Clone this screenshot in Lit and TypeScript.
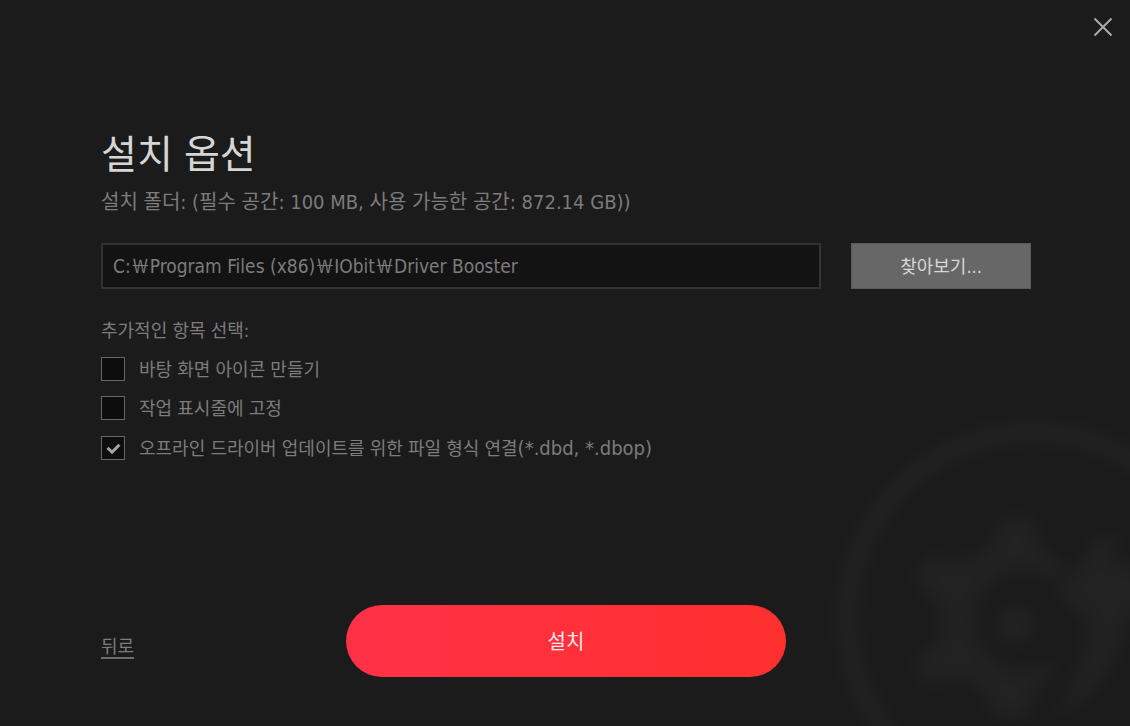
import { LitElement, html, css, nothing } from "lit";
import { customElement, property, state } from "lit/decorators.js";

interface SetupOption {
  id: string;
  label: string;
  pattern?: string;
  checked: boolean;
}

const fontStack = css`"DejaVu Sans Condensed", "Noto Sans CJK KR", sans-serif`;

@customElement("setup-checkbox")
class SetupCheckbox extends LitElement {
  @property() label = "";
  @property() pattern = "";
  @property({ type: Boolean }) checked = false;

  static styles = css`
    :host {
      display: block;
    }
    .row {
      display: flex;
      width: fit-content;
      align-items: center;
      gap: 14px;
      font: 18px/24px ${fontStack};
      color: #7c7c7c;
      cursor: pointer;
    }
    .mark {
      display: grid;
      flex: none;
    }
    .box,
    .tick {
      grid-area: 1 / 1;
      width: 24px;
      height: 24px;
    }
    .box {
      appearance: none;
      box-sizing: border-box;
      margin: 0;
      border: 1px solid #666;
      background: #0d0d0d;
    }
    .tick {
      fill: none;
      stroke: #a6a6a6;
      stroke-width: 3;
      pointer-events: none;
      visibility: hidden;
    }
    .box:checked + .tick {
      visibility: visible;
    }
    .text {
      padding-top: 2px;
    }
    .pattern {
      font-size: 20px;
    }
  `;

  private toggle(e: Event) {
    this.checked = (e.target as HTMLInputElement).checked;
  }

  render() {
    return html`
      <label class="row">
        <span class="mark">
          <input class="box" type="checkbox" .checked=${this.checked} @change=${this.toggle} />
          <svg class="tick" viewBox="0 0 24 24" aria-hidden="true">
            <path d="M6.6 11.8 L11 16.2 L18.4 8.8" />
          </svg>
        </span>
        <span class="text"
          >${this.label}${this.pattern ? html`<span class="pattern">${this.pattern}</span>` : nothing}</span
        >
      </label>
    `;
  }
}

@customElement("app-root")
class AppRoot extends LitElement {
  @state() private path = "C:￦Program Files (x86)￦IObit￦Driver Booster";

  private options: SetupOption[] = [
    { id: "desktop", label: "바탕 화면 아이콘 만들기", checked: false },
    { id: "taskbar", label: "작업 표시줄에 고정", checked: false },
    {
      id: "assoc",
      label: "오프라인 드라이버 업데이트를 위한 파일 형식 연결",
      pattern: "(*.dbd, *.dbop)",
      checked: true,
    },
  ];

  static styles = css`
    :host {
      display: block;
      font-family: ${fontStack};
      color: #7c7c7c;
      background: #1b1b1b;
    }
    * {
      box-sizing: border-box;
    }
    .window {
      position: relative;
      display: flex;
      flex-direction: column;
      min-height: 100vh;
      overflow: hidden;
    }
    .watermark {
      position: absolute;
      right: 0;
      bottom: 0;
      width: 340px;
      height: 326px;
      opacity: 0.027;
      pointer-events: none;
    }
    .titlebar {
      display: flex;
      justify-content: flex-end;
      padding: 12px;
    }
    .close {
      width: 30px;
      height: 30px;
      padding: 0;
      border: 0;
      background: none;
      cursor: pointer;
    }
    .close svg {
      display: block;
      width: 30px;
      height: 30px;
      stroke: #aaa;
      stroke-width: 2;
    }
    .content {
      position: relative;
      flex: 1;
      padding: 73px 99px 0 101px;
    }
    h1 {
      margin: 0;
      font-size: 39px;
      line-height: 56px;
      font-weight: 400;
      color: #d6d6d6;
    }
    .space {
      margin: 5px 0 0;
      font-size: 20px;
      line-height: 28px;
    }
    .folder {
      display: flex;
      gap: 30px;
      margin-top: 27px;
    }
    .path,
    .browse {
      height: 46px;
      border: 2px solid #333;
      border-radius: 0;
      font-family: inherit;
    }
    .path {
      flex: 1;
      min-width: 0;
      padding: 0 10px 4px;
      font-size: 19px;
      color: #7c7c7c;
      background: #131313;
      outline: none;
    }
    .browse {
      width: 180px;
      padding: 0 0 2px;
      border: 1px solid #5a5a5a;
      font-size: 18px;
      color: #d8d8d8;
      background: #676767;
      cursor: pointer;
    }
    .extras {
      min-width: 0;
      margin: 30px 0 0;
      padding: 0;
      border: 0;
    }
    .extras legend {
      padding: 0;
      font-size: 18px;
      line-height: 24px;
    }
    .list {
      display: grid;
      gap: 13px;
      margin-top: 13px;
    }
    .footer {
      position: relative;
      display: grid;
      grid-template-columns: 1fr minmax(0, 440px) 1fr;
      align-items: center;
      padding: 0 99px 49px 101px;
    }
    .back {
      justify-self: start;
      margin-top: 14px;
      border-bottom: 2px solid #6c6c6c;
      font-size: 18px;
      line-height: 20px;
      color: #7c7c7c;
      text-decoration: none;
    }
    .install {
      height: 72px;
      padding: 0 0 2px;
      border: 0;
      border-radius: 36px;
      font-family: inherit;
      font-size: 20px;
      color: #ffe9ea;
      background: linear-gradient(90deg, #ff3147, #ff302e);
      cursor: pointer;
    }
  `;

  private onPath(e: Event) {
    this.path = (e.target as HTMLInputElement).value;
  }

  render() {
    return html`
      <main class="window">
        <svg class="watermark" viewBox="0 0 340 326" aria-hidden="true">
          <defs>
            <filter id="soft" x="-20%" y="-20%" width="140%" height="140%" color-interpolation-filters="sRGB">
              <feGaussianBlur stdDeviation="9" />
            </filter>
          </defs>
          <g filter="url(#soft)" fill="#fff" stroke="none">
            <circle cx="243" cy="218" r="186" fill="none" stroke="#fff" stroke-width="17" />
            <path
              fill-rule="evenodd"
              d="M212 118 H242 L250 148 L274 164 L268 184 A50 50 0 1 0 262 262 L264 276 L246 288 L238 318 H206 L194 290 L168 276 L136 286 L124 262 L152 238 V208 L124 180 L138 156 L172 162 L200 148 Z"
            />
            <circle cx="225" cy="225" r="19" />
            <path
              d="M304 140 L326 134 L322 164 L360 164 V200 L334 226 Q326 276 284 306 L262 318 Q296 276 300 218 L270 200 Q272 180 290 168 Z"
            />
          </g>
        </svg>
        <header class="titlebar">
          <button class="close" type="button" aria-label="닫기">
            <svg viewBox="0 0 30 30" aria-hidden="true">
              <path d="M6.5 6.5 L23.5 23.5 M23.5 6.5 L6.5 23.5" />
            </svg>
          </button>
        </header>
        <section class="content">
          <h1>설치 옵션</h1>
          <p class="space">
            <label for="path">설치 폴더: (필수 공간: 100 MB, 사용 가능한 공간: 872.14 GB))</label>
          </p>
          <div class="folder">
            <input id="path" class="path" type="text" spellcheck="false" .value=${this.path} @input=${this.onPath} />
            <button class="browse" type="button">찾아보기...</button>
          </div>
          <fieldset class="extras">
            <legend>추가적인 항목 선택:</legend>
            <div class="list">
              ${this.options.map(
                (o) => html`<setup-checkbox
                  id=${o.id}
                  .label=${o.label}
                  .pattern=${o.pattern ?? ""}
                  .checked=${o.checked}
                ></setup-checkbox>`
              )}
            </div>
          </fieldset>
        </section>
        <footer class="footer">
          <a class="back" href="#">뒤로</a>
          <button class="install" type="button">설치</button>
        </footer>
      </main>
    `;
  }
}
